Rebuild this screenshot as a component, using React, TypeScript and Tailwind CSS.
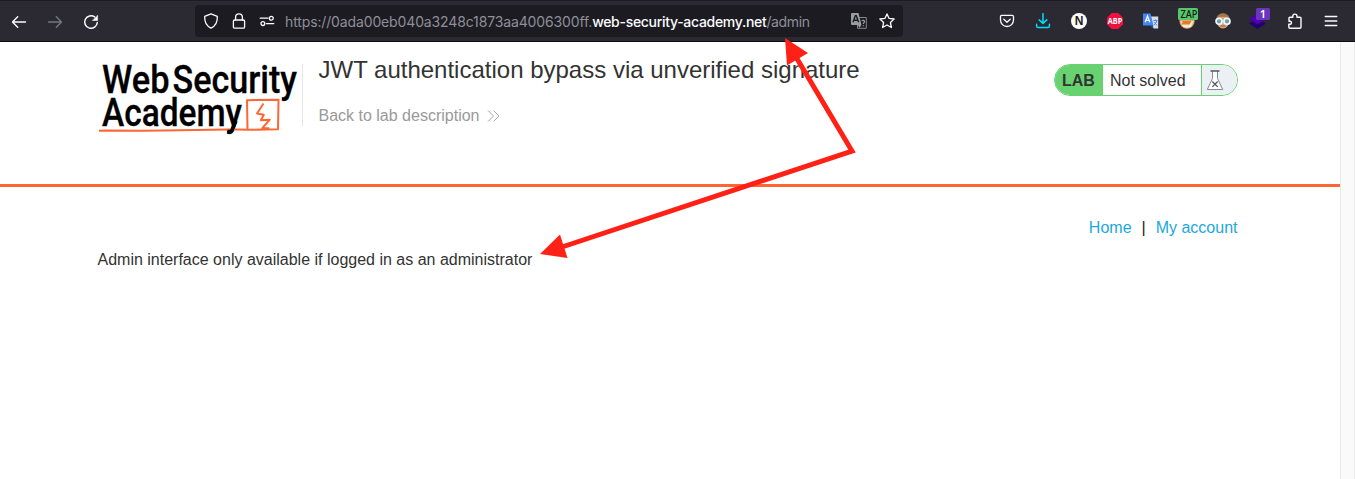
import type { ReactNode } from "react";

function Icon({ w = 16, h = 16, children, className = "" }: { w?: number; h?: number; children: ReactNode; className?: string }) {
  return (
    <svg width={w} height={h} viewBox={`0 0 ${w} ${h}`} fill="none" stroke="currentColor" strokeWidth="1.3" strokeLinecap="round" strokeLinejoin="round" className={`shrink-0 ${className}`}>
      {children}
    </svg>
  );
}

function AddressBar() {
  return (
    <div className="flex h-8 w-[708px] shrink-0 items-center rounded bg-[#1c1b22] pl-2 text-[#fbfbfe]">
      <Icon>
        <path d="M8 .9 14.3 3.4C14.7 9 12.3 13 8 15.2 3.7 13 1.3 9 1.7 3.4Z" />
      </Icon>
      <Icon className="ml-3">
        <rect x="2.4" y="7" width="11.2" height="8.2" rx="1.3" />
        <path d="M4.6 7V4.2a3.4 3.4 0 0 1 6.8 0V7" />
      </Icon>
      <Icon className="ml-3">
        <path d="M1.2 5.2H9M7.5 10.6h7.3" />
        <circle cx="12.3" cy="5.2" r="1.9" />
        <circle cx="3.9" cy="10.6" r="1.9" />
      </Icon>
      <div className="ml-[10px] w-[565.5px] whitespace-nowrap pt-0.5 font-['Inter',sans-serif] text-[14px] leading-8 text-[#8f8f98]">
        <span className="tracking-[-0.135px]">https://0ada00eb040a3248c1873aa4006300ff.</span>
        <span className="font-medium tracking-[-0.3px] text-[#fbfbfe]">web-security-academy.net</span>
        <span className="tracking-[-0.38px]">/admin</span>
      </div>
      <svg width="16" height="16" viewBox="0 0 16 16" className="shrink-0">
        <path d="M6.5 4.5H15.3V15.3H6.5Z" fill="none" stroke="#85858d" />
        <path d="M0 1Q0 0 1 0H7.5L10.5 12H1Q0 12 0 11Z" fill="#9b9ba2" />
        <path d="M7 12h3.5L8.3 15Z" fill="#9b9ba2" />
        <path d="M2 9.3 4.3 2.8h1L7.6 9.3M3 7.3h3.6" fill="none" stroke="#1c1b22" strokeWidth="1.4" />
        <path d="M11 8.2c.3-1.2 2.8-1 2.5.6-.2.9-1.2 1-1.2 2.1M12.3 12.2v1" fill="none" stroke="#9b9ba2" strokeWidth="1.2" />
      </svg>
      <Icon className="ml-3">
        <path d="M8 .9 10.1 5.4l5 .6-3.7 3.5 1 5L8 12l-4.4 2.5 1-5L.9 6l5-.6Z" />
      </Icon>
    </div>
  );
}

function Extensions() {
  return (
    <div className="ml-auto flex h-full items-center gap-5 pr-4 text-[#fbfbfe]">
      <Icon>
        <path d="M2.7 2.3h10.6c.7 0 1.2.5 1.2 1.2V7a6.5 6.5 0 0 1-13 0V3.5c0-.7.5-1.2 1.2-1.2ZM4.8 6.3 8 9.2l3.2-2.9" />
      </Icon>
      <Icon className="text-[#00ddff]">
        <path d="M8 .7v9.6M4.2 6.9 8 10.5l3.8-3.6M1.6 11.3V13q0 1.500 1.500 1.500h9.800q1.500 0 1.500-1.500v-1.700" strokeWidth="1.5" />
      </Icon>
      <div className="flex size-4 items-center justify-center rounded-full bg-white font-['Liberation_Sans',sans-serif] text-[12px] font-bold leading-none text-[#222]">N</div>
      <svg width="16" height="16" viewBox="0 0 16 16" className="shrink-0">
        <path d="M4.7 0h6.6L16 4.7v6.6L11.3 16H4.7L0 11.3V4.7Z" fill="#f01140" />
        <text x="0.8" y="11.400" textLength="14.400" lengthAdjust="spacingAndGlyphs" fill="#fff" className="font-['Noto_Sans',sans-serif] text-[9.5px] font-bold">ABP</text>
      </svg>
      <svg width="16" height="16" viewBox="0 0 16 16" className="shrink-0">
        <path d="M7 3.5h8.200V15.500H10.500Z" fill="#d9dce2" />
        <path d="M0 .5h7.500l3 12H0Z" fill="#4386f5" />
        <path d="m7.300 12.500 3.200 0-1.200 2.700Z" fill="#2556a8" />
        <path d="M2.200 9.200 4.500 3l2.300 6.200M3.200 7.300h2.700" fill="none" stroke="#fff" strokeWidth="1.2" />
        <path d="M10.500 7.500h4M12.400 6.500v1M13.800 7.700c-.4 2-1.500 3.100-2.800 4.200M11.300 9l2.800 3.500" fill="none" stroke="#4386f5" />
      </svg>
      <svg width="22" height="26" viewBox="0 0 22 26" className="-mx-[3px] shrink-0">
        <circle cx="11" cy="13.200" r="7.600" fill="#dfa46f" />
        <path d="M4.500 13h13l-2 5h-9Z" fill="#f7e5cc" />
        <path d="M6.500 13h9l-2 3.500H6Z" fill="#e47b27" />
        <path d="M7 18q4 2 8 0" stroke="#fff" strokeWidth="1.3" fill="none" />
        <rect x="2" y="0" width="20" height="12" rx="1.5" fill="#58c76b" />
        <text x="4.500" y="10.300" textLength="17" lengthAdjust="spacingAndGlyphs" fill="#102014" className="font-['Noto_Sans',sans-serif] text-[11px] font-medium">ZAP</text>
      </svg>
      <svg width="16" height="16" viewBox="0 0 16 16" className="shrink-0">
        <ellipse cx="8" cy="8" rx="6.200" ry="7.500" fill="#d9a47b" />
        <path d="M1.300 6Q2 .5 8 .5T14.700 6Q11 3 8 4 4 3 1.300 6Z" fill="#a57646" />
        <circle cx="4" cy="8.300" r="3" fill="#6d9eaa" stroke="#edf8f8" strokeWidth="1.7" />
        <circle cx="12" cy="8.300" r="3" fill="#6d9eaa" stroke="#edf8f8" strokeWidth="1.7" />
        <path d="M5.500 13h5" stroke="#9f583e" />
      </svg>
      <svg width="22" height="26" viewBox="0 0 22 26" className="-mx-[3px] shrink-0">
        <path d="m1 15.500 8.500-5 8.500 5-8.500 5.500Z" fill="#22006f" />
        <path d="m1 11 8.500-5.500 8.500 5.500-8.500 5.500Z" fill="#4c00b0" />
        <rect x="8" y="0" width="14" height="12" rx="1.5" fill="#6b35bd" />
        <text x="15" y="10.300" textAnchor="middle" fill="#fff" className="font-['Noto_Sans',sans-serif] text-[11px] font-semibold">1</text>
      </svg>
      <Icon>
        <path d="M2 8.200V5.300q0-1 1-1h2.800V3.200a2.100 2.100 0 0 1 4.200 0v1.100h3q1 0 1 1v8.700q0 1.200-1.200 1.200H3q-1.200 0-1.200-1.200v-2.700h1.500a1.600 1.600 0 0 0 0-3.100Z" strokeWidth="1.4" />
      </Icon>
      <Icon>
        <path d="M2.200 3.500h11.600M2.200 8h11.600M2.200 12.500h11.600" strokeWidth="1.3" />
      </Icon>
    </div>
  );
}

function Toolbar() {
  return (
    <div className="flex h-[42px] items-center border-b border-[#0c0c0d] border-t border-t-[#1c1b22] bg-[#2b2a33]">
      <div className="flex w-[195px] shrink-0 items-center gap-5 pl-[11px] pt-0.5 text-[#fbfbfe]">
        <Icon>
          <path d="M14.500 8H1.700M6.700 2.800 1.500 8l5.200 5.200" strokeWidth="1.4" />
        </Icon>
        <Icon className="text-[#77777e]">
          <path d="M1.500 8h12.800M9.300 2.800 14.500 8l-5.200 5.200" strokeWidth="1.4" />
        </Icon>
        <Icon>
          <path d="M11.800 3A6.300 6.300 0 1 0 14.300 8.500" strokeWidth="1.5" />
          <path d="M14.600 1.500v5H9.600Z" fill="currentColor" strokeWidth=".5" />
        </Icon>
      </div>
      <AddressBar />
      <Extensions />
    </div>
  );
}

function AcademyLogo() {
  return (
    <svg width="205" height="75" viewBox="97 62 205 75" className="shrink-0 overflow-visible">
      <g fill="#000" stroke="#000" strokeWidth=".3" className="font-['Roboto',sans-serif] text-[38.5px] font-medium">
        <text x="102" y="93.300" textLength="67.5" lengthAdjust="spacingAndGlyphs">Web</text>
        <text x="172.500" y="93.300" textLength="124.500" lengthAdjust="spacingAndGlyphs">Security</text>
        <text x="102" y="125.500" textLength="140" lengthAdjust="spacingAndGlyphs">Academy</text>
      </g>
      <path d="m99 130.800 7-.4 40 .4 82-1.200h9l12 .2 29-.6.500-29.500-31.500.5.500 29" fill="none" stroke="#ff6633" strokeWidth="2" strokeLinejoin="round" />
      <path d="m263.500 103.500-6.500 10 6.800 1.200-3 5.500 9-.5-7.500 8.500h7" fill="none" stroke="#ff6633" strokeWidth="2" strokeLinejoin="round" />
      <path d="M236 121 232 130Q231 132 227.500 131.500" fill="none" stroke="#000" strokeWidth="3.5" />
    </svg>
  );
}

function LabStatus() {
  return (
    <div className="mt-[22px] flex h-8 w-[184px] items-stretch overflow-hidden rounded-full border border-[#67d26f] bg-white text-base text-[#333332]">
      <div className="flex w-12 items-center bg-[#67d26f] pl-[7px] pt-0.5 font-bold">LAB</div>
      <div className="flex w-[99px] items-center border-r border-[#67d26f] pl-[7px] pt-0.5">Not solved</div>
      <div className="flex flex-1 bg-[#eaf0f3] pl-[4px] pt-[5px]">
        <svg width="18" height="21" viewBox="0 0 18 21" fill="none">
          <path d="M6.500 1v7.500L1.300 19.500h15.400L11.500 8.500V1" fill="#fff" stroke="#858b8d" />
          <path d="M4.500 1h9M6.300 11.500l5.400 5.400M11.700 11.500l-5.400 5.400" stroke="#53595b" strokeWidth="1.3" />
        </svg>
      </div>
    </div>
  );
}

function Arrows() {
  return (
    <svg width="320" height="226" viewBox="537 36 320 226" className="pointer-events-none absolute left-[537px] top-9">
      <path d="M796 57 852 151 562 247" fill="none" stroke="#ff2116" strokeWidth="5" />
      <path d="m785 38 23 15-21 12.500ZM540 254l20-19.500 7.500 23.500Z" fill="#ff2116" />
    </svg>
  );
}

export default function App() {
  return (
    <div className="relative h-[479px] overflow-hidden bg-white font-['Liberation_Sans',sans-serif] text-[#333332]">
      <Toolbar />
      <div className="flex h-[437px]">
        <main className="flex w-[1340px] flex-col">
          <header className="flex h-[145px] border-b-[3px] border-[#ff6633] pl-[97px] pr-[102px]">
            <div className="pt-5">
              <AcademyLogo />
            </div>
            <div className="mt-[22px] h-[62px] border-l border-[#e6e6e6] pl-[15.5px]">
              <h1 className="-mt-2 whitespace-nowrap text-[24px] leading-7">JWT authentication bypass via unverified signature</h1>
              <a className="mt-[22px] flex items-center text-base leading-5 text-[#999]">
                Back to lab description
                <svg width="13" height="14" viewBox="0 0 13 14" fill="none" stroke="#aaa" className="ml-[7.5px]">
                  <path d="m1 1.500 5.500 5.500L1 12.500M6.500 1.500 12 7l-5.500 5.500" />
                </svg>
              </a>
            </div>
            <div className="ml-auto">
              <LabStatus />
            </div>
          </header>
          <nav className="flex justify-end pr-[102.5px] pt-[31px] text-base leading-5 text-[#1ba8e0]">
            <a>Home</a>
            <span className="mx-[10px] text-[#222]">|</span>
            <a>My account</a>
          </nav>
          <p className="pl-[97.5px] pt-3 text-base leading-5">Admin interface only available if logged in as an administrator</p>
        </main>
        <div className="w-[15px] border-l border-r border-[#e8e8e8] bg-[#fafafa]" />
      </div>
      <Arrows />
    </div>
  );
}
